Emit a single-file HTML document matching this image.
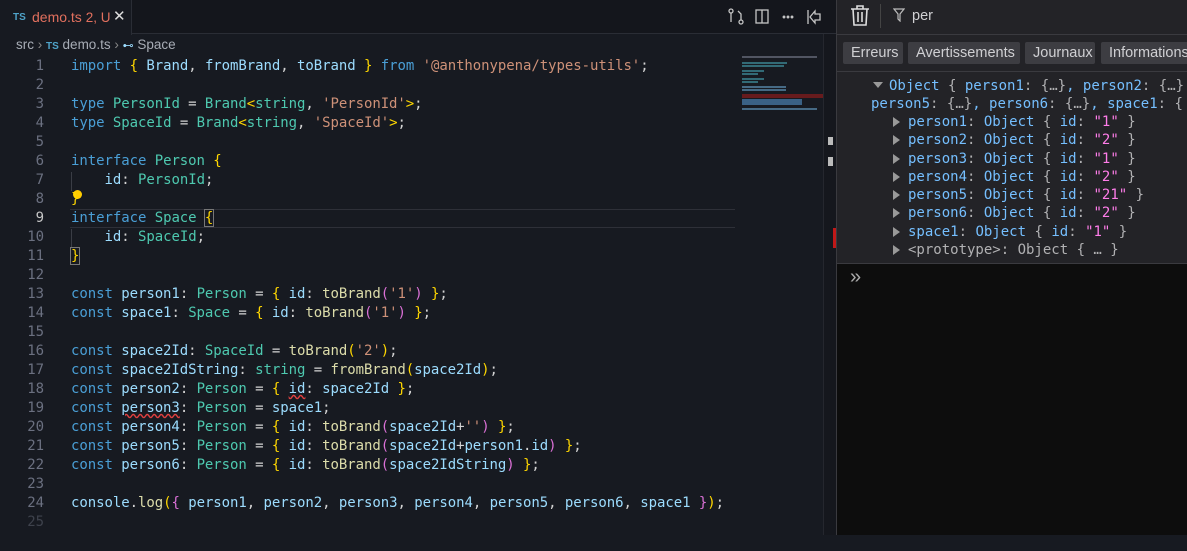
<!DOCTYPE html>
<html><head><meta charset="utf-8"><style>
*{margin:0;padding:0;box-sizing:border-box}
body{width:1187px;height:535px;overflow:hidden;background:#171a21;font-family:"Liberation Sans",sans-serif;position:relative}
.tabbar{position:absolute;left:0;top:0;width:836px;height:34px;background:#14161c;border-bottom:1px solid #2a2d35}
.tab{position:absolute;left:0;top:0;width:132px;height:35px;background:#171a21;border-right:1px solid #2a2d35}
.ts{color:#4fa3c9;font-weight:bold;font-size:10px}
.crumb{position:absolute;left:16px;top:37px;font-size:13.5px;color:#a8adb6}
.code{position:absolute;left:0;top:57px;font-family:"DejaVu Sans Mono",monospace;font-size:14px;line-height:19px;white-space:pre;letter-spacing:-0.06px}
.ln{position:absolute;left:0;width:44px;text-align:right;color:#6b7080}
.line{position:absolute;left:71px;color:#d4d4d4}
.k{color:#4a9fd6}.t{color:#4ec9b0}.v{color:#9cdcfe}.s{color:#ce9178}.f{color:#dcdcaa}.b{color:#ffd700}.p{color:#da70d6}
.right{position:absolute;left:836px;top:0;width:351px;height:535px;background:#232327;border-left:1px solid #3a3a3f}
.btn{position:absolute;top:42px;height:22px;background:#3d3d42;color:#d0d0d3;font-size:14.5px;line-height:22px;padding:0 8px;border-radius:2px;white-space:nowrap;overflow:hidden}
.con{position:absolute;font-family:"DejaVu Sans Mono",monospace;font-size:14px;color:#75bfff}
.con div{height:18.3px;line-height:18.3px;white-space:pre}
.str{color:#ff7de9}.g{color:#b1b1b3}
.tri{display:inline-block;width:0;height:0;border-top:5px solid transparent;border-bottom:5px solid transparent;border-left:7px solid #999;margin-right:8px;vertical-align:-1px}
</style></head><body>
<div class="tabbar">
 <div class="tab"><span class="ts" style="position:absolute;left:13px;top:12px">TS</span><span style="position:absolute;left:32px;top:9px;font-size:14px;color:#e2705e">demo.ts <span style="font-size:13.5px">2, U</span></span><span style="position:absolute;left:113px;top:7px;color:#ddd;font-size:15px">✕</span></div>
 <svg style="position:absolute;left:727px;top:8px" width="100" height="18" viewBox="0 0 100 18" fill="none" stroke="#c5c5c5" stroke-width="1.3">
  <circle cx="4" cy="3" r="2"/><circle cx="14" cy="14" r="2"/><path d="M4 5v9M14 12V6l-3-3"/>
  <rect x="29" y="2" width="12" height="13"/><path d="M35 2v13"/>
  <circle cx="57" cy="9" r=".8" fill="#c5c5c5"/><circle cx="61" cy="9" r=".8" fill="#c5c5c5"/><circle cx="65" cy="9" r=".8" fill="#c5c5c5"/>
  <path d="M81 2v14M93 6h-5V3l-5 6 5 6v-3h5z"/>
 </svg>
</div>
<div class="crumb">src <span style="color:#888">›</span> <span class="ts">TS</span> demo.ts <span style="color:#888">›</span> <span style="color:#9cdcfe;font-size:11px">⊷</span> Space</div>
<div style="position:absolute;left:70px;top:209px;width:665px;height:19px;border-top:1px solid #2e3038;border-bottom:1px solid #2e3038"></div>
<div style="position:absolute;left:71px;top:172px;width:1px;height:19px;background:#3a3d45"></div>
<div style="position:absolute;left:71px;top:229px;width:1px;height:19px;background:#3a3d45"></div>
<div style="position:absolute;left:73px;top:190px;width:9px;height:9px;border-radius:50%;background:#ffcc00"></div>
<div class="code">
<div class="ln" style="top:0">1</div><div class="line" style="top:0"><span class="k">import</span> <span class="b">{</span> <span class="v">Brand</span>, <span class="v">fromBrand</span>, <span class="v">toBrand</span> <span class="b">}</span> <span class="k">from</span> <span class="s">'@anthonypena/types-utils'</span>;</div>
<div class="ln" style="top:19px">2</div>
<div class="ln" style="top:38px">3</div><div class="line" style="top:38px"><span class="k">type</span> <span class="t">PersonId</span> = <span class="t">Brand</span><span class="b">&lt;</span><span class="t">string</span>, <span class="s">'PersonId'</span><span class="b">&gt;</span>;</div>
<div class="ln" style="top:57px">4</div><div class="line" style="top:57px"><span class="k">type</span> <span class="t">SpaceId</span> = <span class="t">Brand</span><span class="b">&lt;</span><span class="t">string</span>, <span class="s">'SpaceId'</span><span class="b">&gt;</span>;</div>
<div class="ln" style="top:76px">5</div>
<div class="ln" style="top:95px">6</div><div class="line" style="top:95px"><span class="k">interface</span> <span class="t">Person</span> <span class="b">{</span></div>
<div class="ln" style="top:114px">7</div><div class="line" style="top:114px">    <span class="v">id</span>: <span class="t">PersonId</span>;</div>
<div class="ln" style="top:133px">8</div><div class="line" style="top:133px"><span class="b">}</span></div>
<div class="ln" style="top:152px;color:#c6c6c6">9</div><div class="line" style="top:152px"><span class="k">interface</span> <span class="t">Space</span> <span class="b" style="outline:1px solid #777">{</span></div>
<div class="ln" style="top:171px">10</div><div class="line" style="top:171px">    <span class="v">id</span>: <span class="t">SpaceId</span>;</div>
<div class="ln" style="top:190px">11</div><div class="line" style="top:190px"><span class="b" style="outline:1px solid #777">}</span></div>
<div class="ln" style="top:209px">12</div>
<div class="ln" style="top:228px">13</div><div class="line" style="top:228px"><span class="k">const</span> <span class="v">person1</span>: <span class="t">Person</span> = <span class="b">{</span> <span class="v">id</span>: <span class="f">toBrand</span><span class="p">(</span><span class="s">'1'</span><span class="p">)</span> <span class="b">}</span>;</div>
<div class="ln" style="top:247px">14</div><div class="line" style="top:247px"><span class="k">const</span> <span class="v">space1</span>: <span class="t">Space</span> = <span class="b">{</span> <span class="v">id</span>: <span class="f">toBrand</span><span class="p">(</span><span class="s">'1'</span><span class="p">)</span> <span class="b">}</span>;</div>
<div class="ln" style="top:266px">15</div>
<div class="ln" style="top:285px">16</div><div class="line" style="top:285px"><span class="k">const</span> <span class="v">space2Id</span>: <span class="t">SpaceId</span> = <span class="f">toBrand</span><span class="b">(</span><span class="s">'2'</span><span class="b">)</span>;</div>
<div class="ln" style="top:304px">17</div><div class="line" style="top:304px"><span class="k">const</span> <span class="v">space2IdString</span>: <span class="t">string</span> = <span class="f">fromBrand</span><span class="b">(</span><span class="v">space2Id</span><span class="b">)</span>;</div>
<div class="ln" style="top:323px">18</div><div class="line" style="top:323px"><span class="k">const</span> <span class="v">person2</span>: <span class="t">Person</span> = <span class="b">{</span> <span class="v" style="text-decoration:underline wavy #e04040">id</span>: <span class="v">space2Id</span> <span class="b">}</span>;</div>
<div class="ln" style="top:342px">19</div><div class="line" style="top:342px"><span class="k">const</span> <span class="v" style="text-decoration:underline wavy #e04040">person3</span>: <span class="t">Person</span> = <span class="v">space1</span>;</div>
<div class="ln" style="top:361px">20</div><div class="line" style="top:361px"><span class="k">const</span> <span class="v">person4</span>: <span class="t">Person</span> = <span class="b">{</span> <span class="v">id</span>: <span class="f">toBrand</span><span class="p">(</span><span class="v">space2Id</span>+<span class="s">''</span><span class="p">)</span> <span class="b">}</span>;</div>
<div class="ln" style="top:380px">21</div><div class="line" style="top:380px"><span class="k">const</span> <span class="v">person5</span>: <span class="t">Person</span> = <span class="b">{</span> <span class="v">id</span>: <span class="f">toBrand</span><span class="p">(</span><span class="v">space2Id</span>+<span class="v">person1</span>.<span class="v">id</span><span class="p">)</span> <span class="b">}</span>;</div>
<div class="ln" style="top:399px">22</div><div class="line" style="top:399px"><span class="k">const</span> <span class="v">person6</span>: <span class="t">Person</span> = <span class="b">{</span> <span class="v">id</span>: <span class="f">toBrand</span><span class="p">(</span><span class="v">space2IdString</span><span class="p">)</span> <span class="b">}</span>;</div>
<div class="ln" style="top:418px">23</div>
<div class="ln" style="top:437px">24</div><div class="line" style="top:437px"><span class="v">console</span>.<span class="f">log</span><span class="b">(</span><span class="p">{</span> <span class="v">person1</span>, <span class="v">person2</span>, <span class="v">person3</span>, <span class="v">person4</span>, <span class="v">person5</span>, <span class="v">person6</span>, <span class="v">space1</span> <span class="p">}</span><span class="b">)</span>;</div>
<div class="ln" style="top:456px;color:#3e424c">25</div>
</div>
<div style="position:absolute;left:742px;top:56px;width:81px;height:50px;opacity:.7">
 <div style="height:2px;width:75px;background:#6a6f7e;margin-bottom:4px"></div>
 <div style="height:2px;width:45px;background:#3e8c9a;margin-bottom:1px"></div><div style="height:2px;width:42px;background:#3e8c9a;margin-bottom:3px"></div>
 <div style="height:2px;width:22px;background:#3e8c9a;margin-bottom:1px"></div><div style="height:2px;width:16px;background:#3e8c9a;margin-bottom:3px"></div>
 <div style="height:2px;width:22px;background:#3e8c9a;margin-bottom:1px"></div><div style="height:2px;width:16px;background:#3e8c9a;margin-bottom:3px"></div>
 <div style="height:2px;width:44px;background:#5b8cb0;margin-bottom:1px"></div><div style="height:2px;width:44px;background:#5b8cb0;margin-bottom:3px"></div>
 <div style="height:4px;width:81px;background:#8a1c1c;margin-bottom:1px"></div>
 <div style="height:6px;width:60px;background:#4a7fb0;margin-bottom:3px"></div>
 <div style="height:2px;width:75px;background:#5b8cb0"></div>
</div>
<div style="position:absolute;left:823px;top:34px;width:13px;height:501px;background:#15171d;border-left:1px solid #25272e"></div>
<div style="position:absolute;left:828px;top:137px;width:5px;height:8px;background:#bbb"></div>
<div style="position:absolute;left:828px;top:157px;width:5px;height:9px;background:#bbb"></div>
<div style="position:absolute;left:833px;top:228px;width:3px;height:20px;background:#c01818"></div>
<div class="right">
 <svg style="position:absolute;left:13px;top:5px" width="20" height="22" viewBox="0 0 20 22" fill="none" stroke="#ddd" stroke-width="1.6"><path d="M1 4h18M7 4V1h6v3M3 4l1 16h12l1-16M8 7v10M12 7v10"/></svg>
 <div style="position:absolute;left:43px;top:4px;width:1px;height:24px;background:#444"></div>
 <svg style="position:absolute;left:56px;top:8px" width="12" height="14" viewBox="0 0 12 14" fill="none" stroke="#bbb" stroke-width="1.2"><path d="M1 1h10L7 6v7L5 11V6z"/></svg>
 <div style="position:absolute;left:75px;top:8px;font-size:14.5px;color:#d0d0d3">per</div>
 <div style="position:absolute;left:0;top:34px;width:351px;height:1px;background:#3a3a3f"></div>
 <div class="btn" style="left:6px;width:60px">Erreurs</div>
 <div class="btn" style="left:71px;width:112px">Avertissements</div>
 <div class="btn" style="left:188px;width:70px">Journaux</div>
 <div class="btn" style="left:264px;width:100px">Informations</div>
 <div style="position:absolute;left:0;top:71px;width:351px;height:1px;background:#3a3a3f"></div>
 <div class="con" style="left:36px;top:77px"><div><span style="display:inline-block;border-left:5px solid transparent;border-right:5px solid transparent;border-top:6px solid #999;margin-right:6px;vertical-align:2px"></span>Object <span class="g">{</span> person1<span class="g">:</span> <span class="g">{…}</span>, person2<span class="g">:</span> <span class="g">{…}</span></div><div style="margin-left:-2px">person5<span class="g">:</span> <span class="g">{…}</span>, person6<span class="g">:</span> <span class="g">{…}</span>, space1<span class="g">: {</span></div></div>
 <div class="con" style="left:56px;top:113px"><div><span class="tri"></span>person1<span class="g">:</span> Object <span class="g">{</span> id<span class="g">:</span> <span class="str">"1"</span> <span class="g">}</span></div><div><span class="tri"></span>person2<span class="g">:</span> Object <span class="g">{</span> id<span class="g">:</span> <span class="str">"2"</span> <span class="g">}</span></div><div><span class="tri"></span>person3<span class="g">:</span> Object <span class="g">{</span> id<span class="g">:</span> <span class="str">"1"</span> <span class="g">}</span></div><div><span class="tri"></span>person4<span class="g">:</span> Object <span class="g">{</span> id<span class="g">:</span> <span class="str">"2"</span> <span class="g">}</span></div><div><span class="tri"></span>person5<span class="g">:</span> Object <span class="g">{</span> id<span class="g">:</span> <span class="str">"21"</span> <span class="g">}</span></div><div><span class="tri"></span>person6<span class="g">:</span> Object <span class="g">{</span> id<span class="g">:</span> <span class="str">"2"</span> <span class="g">}</span></div><div><span class="tri"></span>space1<span class="g">:</span> Object <span class="g">{</span> id<span class="g">:</span> <span class="str">"1"</span> <span class="g">}</span></div><div><span class="tri"></span><span class="g">&lt;prototype&gt;: Object { … }</span></div></div>
 <div style="position:absolute;left:0;top:263px;width:351px;height:272px;background:#0d0d0d;border-top:1px solid #3a3a3f"></div>
 <div style="position:absolute;left:13px;top:266px;color:#aaa;font-size:20px">»</div>
</div>
</body></html>
